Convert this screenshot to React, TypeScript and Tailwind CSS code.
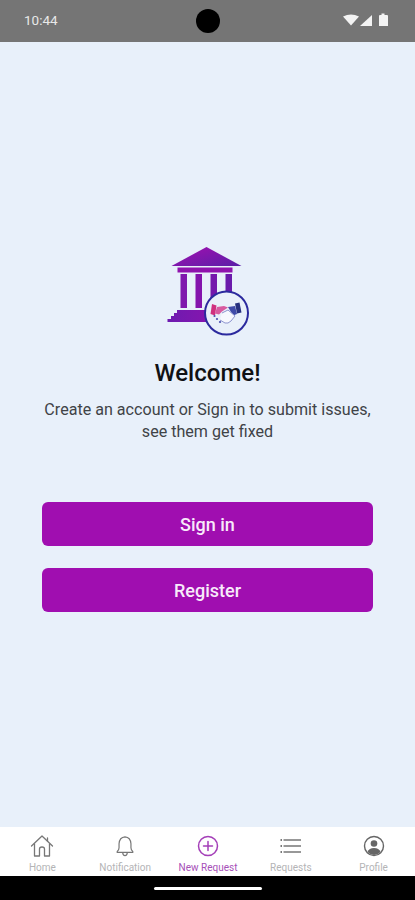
import React from "react";

const Logo = () => (
  <svg width="84" height="92" viewBox="0 0 84 92" fill="none">
    <defs>
      <linearGradient id="g" x1="0" y1="0" x2="1" y2="1">
        <stop offset="0" stopColor="#a30fb0" />
        <stop offset="1" stopColor="#5a1fa8" />
      </linearGradient>
      <linearGradient id="s" x1="0" y1="0" x2="1" y2="0">
        <stop offset="0" stopColor="#6d1bb0" />
        <stop offset="1" stopColor="#8a14ae" />
      </linearGradient>
    </defs>
    <path d="M39.500 0 L74.500 19 H4.500 Z" fill="url(#g)" />
    <rect x="10.500" y="20.500" width="55" height="5" fill="#8f13ad" />
    <rect x="13.500" y="27" width="6.500" height="34" fill="#7f17ad" />
    <rect x="28.500" y="27" width="6.500" height="34" fill="#8414ad" />
    <rect x="43.500" y="27" width="6.500" height="34" fill="#7417ac" />
    <rect x="58.500" y="27" width="6.500" height="24" fill="#6a1aab" />
    <path d="M10 63 H50 V75 H0.500 V72 H4 V69 H7 V66 H10 Z" fill="url(#s)" />
    <circle cx="59.500" cy="66" r="21.500" fill="#e9f0fa" stroke="#2c2a9e" strokeWidth="2" />
    <path d="M45 57 l4.500 1.500 l-1.500 10 l-4.500 -1.500 Z" fill="#d0307f" />
    <path d="M50 60 l7 -1 l4 1.500 l-6 4 l-3 3 l-4 -1 Z" fill="#d85aa0" />
    <path d="M61 60 l7 -1 l2 8 l-4 1.500 Z" fill="#3f4aa8" />
    <path d="M68 56.500 l4.500 -1 l2 10 l-4.500 1 Z" fill="#27307f" />
    <path d="M55 66 l6 -3 l7 6 l-4 5 q-3 3 -6 2 l-5 -3" stroke="#8d94cf" strokeWidth="1" fill="#f7f8fe" />
    <circle cx="50" cy="72" r="1.100" fill="#4a4fb0" />
    <circle cx="53" cy="75" r="1.100" fill="#4a4fb0" />
    <circle cx="47.500" cy="69" r="1.100" fill="#4a4fb0" />
  </svg>
);

const Label = ({ children, active }: { children: React.ReactNode; active?: boolean }) => (
  <span className={`text-[10px] leading-[11px] mt-[4px] whitespace-nowrap ${active ? "text-[#a64fb8]" : "text-[#b4b4b6]"}`}>
    {children}
  </span>
);

const stroke = { stroke: "#777", strokeWidth: 1.3, fill: "none", strokeLinecap: "round" as const, strokeLinejoin: "round" as const };

const Item = ({ icon, label, active }: { icon: React.ReactNode; label: string; active?: boolean }) => (
  <div className="flex-1 flex flex-col items-center pt-[7px]">
    <div className="w-[24px] h-[24px] flex items-center justify-center">{icon}</div>
    <Label active={active}>{label}</Label>
  </div>
);

export default function App() {
  return (
    <div className="w-[415px] h-[900px] flex flex-col overflow-hidden bg-black" style={{ fontFamily: "Roboto, sans-serif" }}>
      <div className="relative h-[42px] shrink-0 bg-[#757575] flex items-center justify-between pl-[24px] pr-[26px] pb-[2px]">
        <span className="text-[13.500px] text-[#e8e8e8]">10:44</span>
        <div className="absolute left-[195.500px] top-[9px] w-[24px] h-[24px] rounded-full bg-black" />
        <svg width="46" height="16" viewBox="0 0 46 16">
          <path d="M0 4.500 Q8 0.500 16 4.500 L8 13.500 Z" fill="#f3f3f3" />
          <path d="M29 3 V14 H17 Z" fill="#f3f3f3" />
          <path d="M36 4 Q36 3 37 3 H38.500 V1.500 H41.500 V3 H44 Q45 3 45 4 V14 H36 Z" fill="#f3f3f3" />
        </svg>
      </div>

      <main className="flex-1 bg-[#e8f0fa] flex flex-col items-center pt-[205px] px-[42px]">
        <div className="ml-[2px]"><Logo /></div>
        <h1 className="text-[24px] leading-[28px] font-medium text-[#101114] mt-[20px]">Welcome!</h1>
        <p className="text-[16.100px] leading-[22px] text-[#3f4347] text-center mt-[12px] w-[340px]">
          Create an account or Sign in to submit issues,
          <br />
          see them get fixed
        </p>
        <button className="w-full h-[44px] mt-[59px] rounded-[6px] bg-[#a00eb0] text-[#f8eafa] text-[18px] font-medium">Sign in</button>
        <button className="w-full h-[44px] mt-[22px] rounded-[6px] bg-[#a00eb0] text-[#f8eafa] text-[18px] font-medium">Register</button>
      </main>

      <nav className="h-[49px] shrink-0 bg-white flex pl-[1px] pr-0">
        <Item
          label="Home"
          icon={
            <svg width="24" height="24" viewBox="0 0 24 24" {...stroke}>
              <path d="M1.500 12 L12 2 L22.500 12" />
              <path d="M17.500 4 V7" />
              <path d="M4.500 10 V22 H9.500 V15 Q9.500 13 12 13 Q14.500 13 14.500 15 V22 H19.500 V10" />
            </svg>
          }
        />
        <Item
          label="Notification"
          icon={
            <svg width="22" height="24" viewBox="0 0 24 24" {...stroke}>
              <path d="M12 2 Q6 2.500 5.500 9.500 V14 Q5.500 16.500 3.500 18 V19 H20.500 V18 Q18.500 16.500 18.500 14 V9.500 Q18 2.500 12 2 Z" />
              <path d="M9.500 19.500 Q10 22.500 12 22.500 Q14 22.500 14.500 19.500" />
            </svg>
          }
        />
        <Item
          active
          label="New Request"
          icon={
            <svg width="22" height="22" viewBox="0 0 22 22" fill="none" stroke="#a43fb8" strokeWidth="1.500" strokeLinecap="round">
              <circle cx="11" cy="11" r="9.500" />
              <path d="M11 6.500 V15.500 M6.500 11 H15.500" />
            </svg>
          }
        />
        <Item
          label="Requests"
          icon={
            <svg width="22" height="18" viewBox="0 0 22 18" fill="none" stroke="#777" strokeWidth="1.400">
              <path d="M3.500 3 H21 M3.500 9 H21 M3.500 15 H21" />
              <path d="M0.500 3 H2 M0.500 9 H2 M0.500 15 H2" strokeWidth="2" />
            </svg>
          }
        />
        <Item
          label="Profile"
          icon={
            <svg width="22" height="22" viewBox="0 0 22 22" fill="none">
              <circle cx="11" cy="11" r="9.500" stroke="#666" strokeWidth="1.400" />
              <circle cx="11" cy="8.500" r="3.300" fill="#666" />
              <path d="M4.500 17 Q6 13 11 13 Q16 13 17.500 17 Q14.500 20 11 20 Q7.500 20 4.500 17 Z" fill="#666" />
            </svg>
          }
        />
      </nav>

      <div className="h-[24px] shrink-0 bg-black flex justify-center pt-[11px]">
        <div className="w-[108px] h-[3px] rounded-full bg-white" />
      </div>
    </div>
  );
}
